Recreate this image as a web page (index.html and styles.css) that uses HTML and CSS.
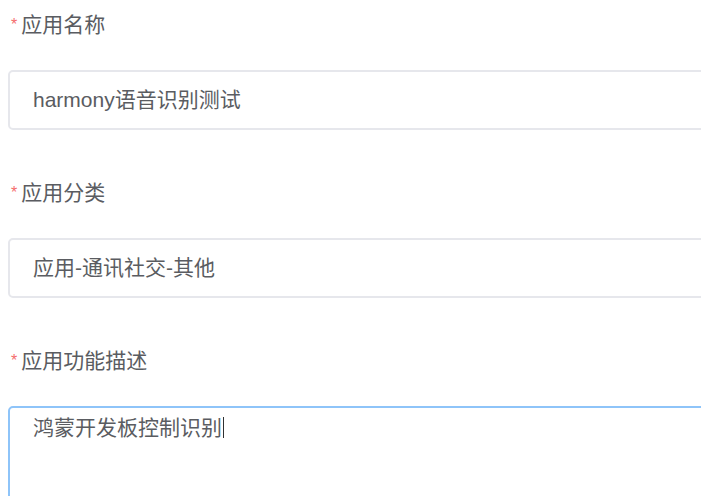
FILE: index.html
```html
<!DOCTYPE html>
<html lang="zh-CN">
<head>
    <meta charset="utf-8" />
    <title>应用信息</title>
    <link rel="stylesheet" href="styles.css">
</head>
<body>
    <form class="form">
        <!--应用名称-->
        <div class="form-item">
            <label class="label"><i class="star">*</i>应用名称</label>
            <div class="input">harmony语音识别测试</div>
        </div>
        <!--应用分类-->
        <div class="form-item">
            <label class="label"><i class="star">*</i>应用分类</label>
            <div class="input">应用-通讯社交-其他</div>
        </div>
        <!--应用功能描述-->
        <div class="form-item">
            <label class="label"><i class="star">*</i>应用功能描述</label>
            <div class="textarea focus">鸿蒙开发板控制识别<span class="caret"></span></div>
        </div>
    </form>
</body>
</html>
```

FILE: styles.css
```css
* {
    margin: 0;
    padding: 0;
    box-sizing: border-box;
}

body {
    font-family: "Liberation Sans", "Noto Sans CJK SC", sans-serif;
    color: #5a5c61;
    background-color: #fff;
    overflow: hidden;
}

.form {
    padding-left: 8px;
}

.form-item {
    margin-bottom: 38px;
}

.label {
    display: block;
    height: 50px;
    line-height: 50px;
    font-size: 21px;
}

    .label .star {
        font-style: normal;
        color: #f56c6c;
        font-size: 16px;
        margin-right: 4px;
        margin-left: 3px;
        vertical-align: 2px;
    }

.input,
.textarea {
    width: 760px;
    margin-top: 20px;
    border: 2px solid #e6e7ec;
    border-radius: 5px;
    padding: 0 23px;
    font-size: 21px;
    background-color: #fff;
}

.input {
    height: 60px;
    line-height: 56px;
}

.textarea {
    height: 130px;
    padding-top: 5px;
    line-height: 30px;
}

    .textarea.focus {
        border-color: #8ec4f9;
    }

.caret {
    display: inline-block;
    width: 1px;
    height: 21px;
    margin-left: 1px;
    vertical-align: -3px;
    background-color: #303133;
}
```
